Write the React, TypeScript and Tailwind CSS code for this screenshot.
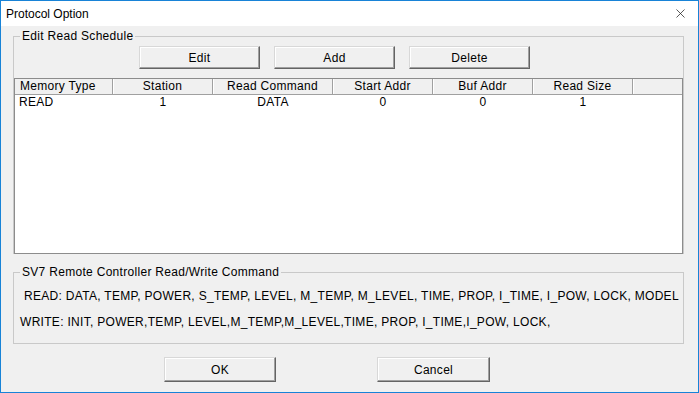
import { X } from 'lucide-react';

const columns = [
  { label: 'Memory Type', width: 'w-[98px]', align: 'text-left pl-[5px]' },
  { label: 'Station', width: 'w-[100px]', align: 'text-center' },
  { label: 'Read Command', width: 'w-[120px]', align: 'text-center' },
  { label: 'Start Addr', width: 'w-[100px]', align: 'text-center' },
  { label: 'Buf Addr', width: 'w-[100px]', align: 'text-center' },
  { label: 'Read Size', width: 'w-[100px]', align: 'text-center' },
];

const rows = [['READ', '1', 'DATA', '0', '0', '1']];

function WinButton({ children, className }: { children: string; className: string }) {
  return (
    <button
      className={`${className} flex items-center justify-center bg-[#f0f0f0] text-black border border-t-[#d8d8d8] border-l-[#d8d8d8] border-r-[#646464] border-b-[#646464] shadow-[inset_-1px_-1px_0_#a0a0a0,inset_1px_1px_0_#ffffff]`}
    >
      {children}
    </button>
  );
}

function GroupLabel({ text }: { text: string }) {
  return (
    <div className="-mt-[8px] ml-[6px] w-fit bg-[#f0f0f0] px-[2px] leading-[14px]">{text}</div>
  );
}

export default function App() {
  return (
    <div className="w-[699px] h-[393px] flex flex-col border border-[#1883d7] bg-[#f0f0f0] text-[12px] tracking-[0.3px] text-black font-['Liberation_Sans',Arial,sans-serif] overflow-hidden">
      {/* Title bar */}
      <div className="h-[25px] bg-white flex items-center justify-between pl-[5px] pr-[10px]">
        <span className="leading-none tracking-normal">Protocol Option</span>
        <X className="w-[15px] h-[15px] text-[#222]" strokeWidth={1.2} />
      </div>

      <div className="pl-[12px] pr-[14px] flex flex-col">
        {/* Edit Read Schedule */}
        <div className="mt-[10px] border-t border-x border-[#c9c9c9] flex flex-col">
          <GroupLabel text="Edit Read Schedule" />
          <div className="mt-[3px] ml-[125px] flex gap-[14px]">
            <WinButton className="w-[121px] h-[23px]">Edit</WinButton>
            <WinButton className="w-[121px] h-[23px]">Add</WinButton>
            <WinButton className="w-[121px] h-[23px]">Delete</WinButton>
          </div>
          <div className="mt-[9px] h-[176px] border border-[#8c8c8c] bg-white flex flex-col">
            <div className="h-[16px] flex bg-[#f0f0f0] border-b border-[#a0a0a0] leading-[15px]">
              {columns.map((c) => (
                <div
                  key={c.label}
                  className={`${c.width} ${c.align} shrink-0 border-r border-[#a0a0a0] shadow-[1px_0_0_#ffffff] whitespace-nowrap`}
                >
                  {c.label}
                </div>
              ))}
              <div className="flex-1" />
            </div>
            {rows.map((r, i) => (
              <div key={i} className="flex h-[15px] leading-[15px]">
                {r.map((v, j) => (
                  <div key={j} className={`${columns[j].width} shrink-0 ${j === 0 ? 'pl-[4px]' : 'text-center'}`}>
                    {v}
                  </div>
                ))}
              </div>
            ))}
          </div>
        </div>

        {/* Command reference */}
        <div className="mt-[18px] h-[72px] border border-[#c9c9c9] flex flex-col">
          <GroupLabel text="SV7 Remote Controller Read/Write Command" />
          <div className="mt-[10px] pl-[10px] leading-[14px] whitespace-nowrap">
            READ: DATA, TEMP, POWER, S_TEMP, LEVEL, M_TEMP, M_LEVEL, TIME, PROP, I_TIME, I_POW, LOCK, MODEL
          </div>
          <div className="mt-[12px] pl-[6px] leading-[14px] whitespace-nowrap">
            WRITE: INIT, POWER,TEMP, LEVEL,M_TEMP,M_LEVEL,TIME, PROP, I_TIME,I_POW, LOCK,
          </div>
        </div>

        <div className="mt-[13px] ml-[151px] flex gap-[101px]">
          <WinButton className="w-[112px] h-[25px]">OK</WinButton>
          <WinButton className="w-[113px] h-[25px]">Cancel</WinButton>
        </div>
      </div>
    </div>
  );
}
